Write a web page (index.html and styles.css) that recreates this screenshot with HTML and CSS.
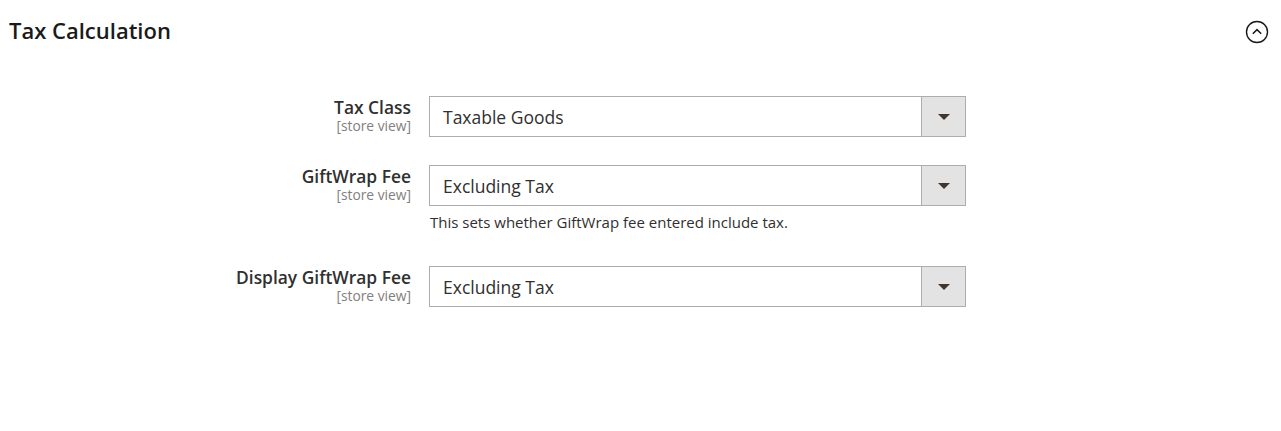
FILE: index.html
```html
<!DOCTYPE html>
<html lang="en">
<head>
  <meta charset="UTF-8" />
  <title>Tax Calculation</title>
  <link rel="stylesheet" href="styles.css">
</head>
<body>
  <div class="section">
    <div class="section-head">
      <h2>Tax Calculation</h2>
      <span class="toggle">
        <svg width="24" height="24" viewBox="0 0 24 24">
          <circle cx="12" cy="12" r="10.5" fill="none" stroke="#1a1a1a" stroke-width="1.4"/>
          <path d="M7.8 13.8 L12 9.6 L16.2 13.8" fill="none" stroke="#1a1a1a" stroke-width="1.5"/>
        </svg>
      </span>
    </div>

    <div class="fields">
      <div class="field">
        <div class="label">
          <span class="name">Tax Class</span>
          <span class="scope">[store view]</span>
        </div>
        <div class="control">
          <div class="select">
            <span class="value">Taxable Goods</span>
            <span class="arrow"></span>
          </div>
        </div>
      </div>

      <div class="field">
        <div class="label">
          <span class="name">GiftWrap Fee</span>
          <span class="scope">[store view]</span>
        </div>
        <div class="control">
          <div class="select">
            <span class="value">Excluding Tax</span>
            <span class="arrow"></span>
          </div>
          <p class="note">This sets whether GiftWrap fee entered include tax.</p>
        </div>
      </div>

      <div class="field">
        <div class="label">
          <span class="name">Display GiftWrap Fee</span>
          <span class="scope">[store view]</span>
        </div>
        <div class="control">
          <div class="select">
            <span class="value">Excluding Tax</span>
            <span class="arrow"></span>
          </div>
        </div>
      </div>
    </div>
  </div>
</body>
</html>
```

FILE: styles.css
```css
body {
  font-family: 'Open Sans', 'Noto Sans', sans-serif;
  background: #fff;
  color: #303030;
  margin: 0;
}

.section {
  padding: 0 9px;
}

.section-head {
  display: flex;
  justify-content: space-between;
  align-items: center;
  height: 60px;
}

.section-head h2 {
  margin: 0;
  font-size: 22px;
  font-weight: 600;
  color: #1a1a1a;
}

.toggle {
  display: flex;
  margin-right: 3px;
  margin-top: 4px;
}

.fields {
  padding-top: 36px;
}

.field {
  display: flex;
  align-items: flex-start;
  margin-bottom: 28px;
}

.label {
  width: 402px;
  padding-right: 18px;
  display: flex;
  flex-direction: column;
  align-items: flex-end;
  padding-top: 0;
}

.label .name {
  font-size: 17.4px;
  font-weight: 600;
  color: #303030;
  line-height: 22px;
}

.label .scope {
  font-size: 13.8px;
  color: #808080;
  line-height: 16px;
}

.select {
  width: 535px;
  height: 39px;
  border: 1px solid #adadad;
  display: flex;
  align-items: center;
  justify-content: space-between;
  background: #fff;
}

.select .value {
  padding-left: 13px;
  font-size: 17.5px;
  color: #303030;
}

.select .arrow {
  width: 43px;
  height: 100%;
  background: #e3e3e3;
  border-left: 1px solid #adadad;
  position: relative;
}

.select .arrow::after {
  content: "";
  position: absolute;
  left: 16px;
  top: 17px;
  border-left: 6px solid transparent;
  border-right: 6px solid transparent;
  border-top: 6px solid #41362f;
}

.note {
  margin: 6px 0 5px 1px;
  font-size: 15px;
  color: #303030;
  line-height: 21px;
}
```
